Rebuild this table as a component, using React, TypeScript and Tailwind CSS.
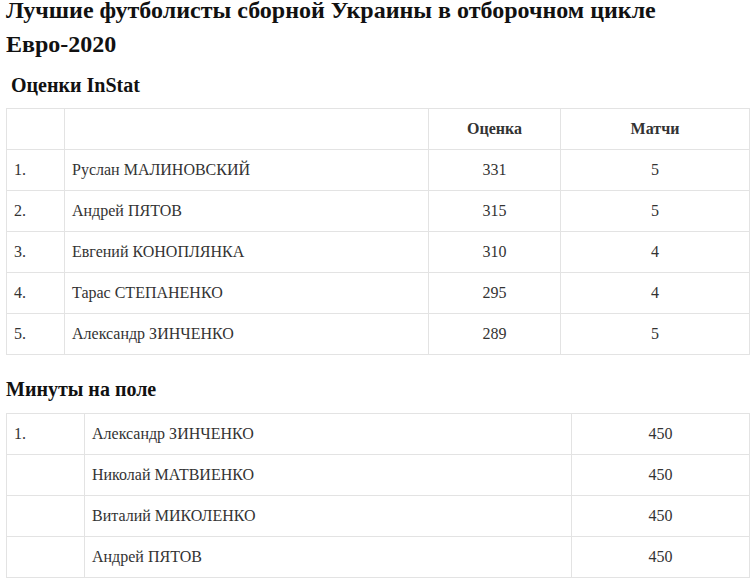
import React from "react";

const t1 = [
  ["1.", "Руслан МАЛИНОВСКИЙ", "331", "5"],
  ["2.", "Андрей ПЯТОВ", "315", "5"],
  ["3.", "Евгений КОНОПЛЯНКА", "310", "4"],
  ["4.", "Тарас СТЕПАНЕНКО", "295", "4"],
  ["5.", "Александр ЗИНЧЕНКО", "289", "5"],
];
const t2 = [
  ["1.", "Александр ЗИНЧЕНКО", "450"],
  ["", "Николай МАТВИЕНКО", "450"],
  ["", "Виталий МИКОЛЕНКО", "450"],
  ["", "Андрей ПЯТОВ", "450"],
];

const cell = "border border-[#e3e3e3] px-[7px] py-[8px] leading-[24px] h-[41px] align-middle";
const tbl = "w-[743px] table-fixed border-collapse font-['Liberation_Serif','Times_New_Roman',serif] text-[16px] text-[#333]";

export default function App() {
  return (
    <div className="w-[755px] h-[585px] overflow-hidden bg-white px-[6px] font-['Liberation_Serif','Times_New_Roman',serif] text-[#333]">
      <h1 className="text-[24px] font-bold text-[#111]">
        <span className="block leading-[20px]">Лучшие футболисты сборной Украины в отборочном цикле</span>
        <span className="block mt-[7px] leading-[34px]">Евро-2020</span>
      </h1>
      <h3 className="mt-[11px] text-[20px] font-bold leading-[26px] text-[#111]">{"\u00a0"}Оценки InStat</h3>
      <table className={"mt-[10px] " + tbl}>
        <colgroup>
          <col className="w-[58px]" />
          <col className="w-[364px]" />
          <col className="w-[132px]" />
          <col className="w-[189px]" />
        </colgroup>
        <tbody>
          <tr>
            <td className={cell}></td>
            <td className={cell}></td>
            <td className={cell + " text-center font-bold"}>Оценка</td>
            <td className={cell + " text-center font-bold"}>Матчи</td>
          </tr>
          {t1.map((r) => (
            <tr key={r[0]}>
              <td className={cell}>{r[0]}</td>
              <td className={cell}>{r[1]}</td>
              <td className={cell + " text-center"}>{r[2]}</td>
              <td className={cell + " text-center"}>{r[3]}</td>
            </tr>
          ))}
        </tbody>
      </table>
      <h3 className="mt-[21px] text-[20px] font-bold leading-[26px] text-[#111]">Минуты на поле</h3>
      <table className={"mt-[11px] " + tbl}>
        <colgroup>
          <col className="w-[78px]" />
          <col className="w-[487px]" />
          <col className="w-[178px]" />
        </colgroup>
        <tbody>
          {t2.map((r, i) => (
            <tr key={i}>
              <td className={cell}>{r[0]}</td>
              <td className={cell}>{r[1]}</td>
              <td className={cell + " text-center"}>{r[2]}</td>
            </tr>
          ))}
        </tbody>
      </table>
    </div>
  );
}
